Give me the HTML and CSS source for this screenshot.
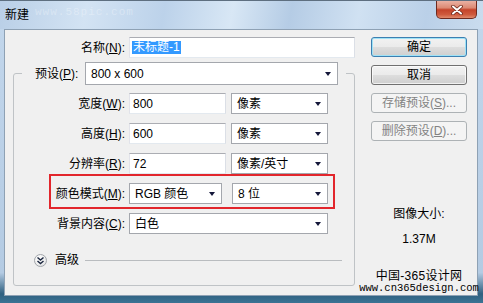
FILE: index.html
```html
<!DOCTYPE html>
<html>
    <head>
        <meta charset="UTF-8">
        <title>新建</title>
        <link rel="stylesheet" href="styles.css">
    </head>
    <body>
        <div class="window">
            <div class="titlebar">
                <span class="title">新建</span>
                <span class="stamp">www.58pic.com</span>
                <div class="close">
                    <svg width="14" height="10" viewBox="0 0 14 10">
                        <path d="M3 1.5 L11 8.5 M11 1.5 L3 8.5" stroke="#6b2618" stroke-width="3.6" stroke-linecap="round"/>
                        <path d="M3 1.5 L11 8.5 M11 1.5 L3 8.5" stroke="#fff" stroke-width="2" stroke-linecap="round"/>
                    </svg>
                </div>
            </div>
            <div class="client">
                <div class="main">
                    <div class="row">
                        <span class="lbl">名称(<u>N</u>):</span>
                        <div class="field name"><span class="picked">未标题-1</span></div>
                    </div>

                    <fieldset class="group">
                        <legend>
                            <div class="preset-row">
                                <span class="preset-lbl">预设(<u>P</u>):</span>
                                <div class="combo preset">800 x 600<i class="arrow"></i></div>
                            </div>
                        </legend>

                        <div class="row">
                            <span class="lbl">宽度(<u>W</u>):</span>
                            <div class="field short">800</div>
                            <div class="combo unit">像素<i class="arrow"></i></div>
                        </div>
                        <div class="row">
                            <span class="lbl">高度(<u>H</u>):</span>
                            <div class="field short">600</div>
                            <div class="combo unit">像素<i class="arrow"></i></div>
                        </div>
                        <div class="row">
                            <span class="lbl">分辨率(<u>R</u>):</span>
                            <div class="field short">72</div>
                            <div class="combo unit">像素/英寸<i class="arrow"></i></div>
                        </div>
                        <!-- this row is circled in red -->
                        <div class="row marked">
                            <span class="lbl">颜色模式(<u>M</u>):</span>
                            <div class="combo mode">RGB 颜色<i class="arrow"></i></div>
                            <div class="combo depth">8 位<i class="arrow"></i></div>
                        </div>
                        <div class="row">
                            <span class="lbl">背景内容(<u>C</u>):</span>
                            <div class="combo bg">白色<i class="arrow"></i></div>
                        </div>

                        <div class="advanced">
                            <span class="expand">
                                <svg width="9" height="9" viewBox="0 0 9 9">
                                    <path d="M1.5 1.5 L4.5 4 L7.5 1.5 M1.5 5 L4.5 7.5 L7.5 5" fill="none" stroke="#1d2840" stroke-width="1.5"/>
                                </svg>
                            </span>
                            <span>高级</span>
                            <span class="rule"></span>
                        </div>
                    </fieldset>
                </div>

                <div class="side">
                    <div class="btn default">确定</div>
                    <div class="btn">取消</div>
                    <div class="btn off">存储预设(<u>S</u>)...</div>
                    <div class="btn off">删除预设(<u>D</u>)...</div>

                    <div class="size-title">图像大小:</div>
                    <div class="size-value">1.37M</div>

                    <div class="site">中国-365设计网</div>
                    <div class="url">www.cn365design.com</div>
                </div>
            </div>
        </div>
    </body>
</html>
```

FILE: styles.css
```css
*{
    box-sizing: border-box;
}

body{
    margin: 0;
    font: 12px/14px "Liberation Sans", "Noto Sans CJK SC", sans-serif;
    color: #000;
    background: #fff;
}

u{
    text-decoration: underline;
    text-underline-offset: 1px;
}

.window{
    width: 483px;
    height: 303px;
    display: flex;
    flex-direction: column;
    background: linear-gradient(180deg, #c3d7ec 0%, #b4cbe3 90%, #2f6080 97%, #3b7394 100%);
}

.titlebar{
    height: 29px;
    display: flex;
    align-items: flex-start;
    padding-left: 5px;
    border-top: 1px solid #5e6f80;
    background: linear-gradient(100deg, #b9cfe7 0%, #d3e3f3 18%, #bcd2ea 34%, #d8e7f5 48%, #b5cce5 60%, #d0e1f2 74%, #bad0e8 88%, #cadcee 100%);
}

.title{
    margin-top: 7px;
    font-size: 12px;
}

.stamp{
    margin: 5px 0 0 6px;
    font: 11px "Liberation Mono", monospace;
    color: rgba(255, 255, 255, 0.3);
    letter-spacing: 1px;
}

.close{
    margin-left: auto;
    margin-right: 6px;
    width: 41px;
    height: 18px;
    display: flex;
    align-items: center;
    justify-content: center;
    border: 1px solid #6e2a1f;
    border-top: none;
    border-radius: 0 0 5px 5px;
    background: linear-gradient(180deg, #eab1a3 0%, #dc8a74 40%, #c4432a 52%, #cf5a3d 80%, #e08a6c 100%);
}

.client{
    flex: 1;
    margin: 0 5px 7px 4px;
    border: 1px solid #8ea1b4;
    background: #f0f0f0;
    display: flex;
    gap: 16px;
    padding: 7px 0 0 8px;
}

.main{
    width: 342px;
}

.row{
    display: flex;
    align-items: center;
    height: 21px;
}

.lbl{
    width: 103px;
    margin-right: 4px;
    text-align: right;
    white-space: nowrap;
}

.main > .row .lbl{
    width: 112px;
}

.field, .combo{
    height: 21px;
    display: flex;
    align-items: center;
    padding-left: 3px;
    background: #fff;
    white-space: nowrap;
}

.field{
    border: 1px solid #abadb3;
    border-color: #abadb3 #dbdfe6 #e3e9ef #e2e3ea;
}

.combo{
    border: 1px solid #a4a7ad;
    padding-left: 5px;
}

.arrow{
    margin-left: auto;
    margin-right: 6px;
    width: 0;
    height: 0;
    border-left: 3.5px solid transparent;
    border-right: 3.5px solid transparent;
    border-top: 4px solid #14173a;
}

.name{
    width: 226px;
    padding-left: 2px;
}

.picked{
    background: #3399ff;
    color: #fff;
    padding: 0 1px;
    line-height: 13px;
}

.group{
    width: 338px;
    margin: 4px 0 0;
    padding: 0 8px 18px 8px;
    border: 1px solid #bfc3c6;
    border-radius: 3px;
}

.group legend{
    padding: 0 8px 0 13px;
}

.preset-row{
    display: flex;
    align-items: center;
}

.preset-lbl{
    width: 50px;
}

.preset{
    width: 253px;
    height: 23px;
}

.group legend + .row{
    margin-top: 8px;
}

.group .row + .row{
    margin-top: 9px;
}

.short{
    width: 97px;
}

.unit{
    width: 97px;
    margin-left: 5px;
}

.marked{
    position: relative;
    margin-left: 31px;
}

.marked .lbl{
    width: 72px;
}

/* red annotation frame */
.marked::after{
    content: "";
    position: absolute;
    top: -9px;
    bottom: -5px;
    left: -4px;
    right: 11px;
    border: 2px solid #e2262c;
}

.mode{
    width: 93px;
}

.depth{
    width: 96px;
    margin-left: 10px;
}

.bg{
    width: 199px;
}

.advanced{
    display: flex;
    align-items: center;
    height: 14px;
    margin-top: 19px;
    padding-left: 12px;
}

.expand{
    width: 13px;
    height: 13px;
    margin-right: 8px;
    display: flex;
    align-items: center;
    justify-content: center;
    border: 1px solid #a2a6ab;
    border-radius: 50%;
    background: radial-gradient(circle at 40% 35%, #ffffff 0%, #f2f2f2 50%, #d4d6d9 100%);
}

.rule{
    flex: 1;
    height: 1px;
    margin: 0 4px 0 6px;
    background: #b9bcbf;
}

.side{
    width: 96px;
    display: flex;
    flex-direction: column;
    align-items: center;
}

.btn{
    width: 96px;
    height: 20px;
    margin-bottom: 8px;
    display: flex;
    align-items: center;
    justify-content: center;
    border: 1px solid #707070;
    border-radius: 3px;
    background: linear-gradient(180deg, #f2f2f2 0%, #ebebeb 48%, #dddddd 52%, #cfcfcf 100%);
    box-shadow: inset 0 0 0 1px rgba(255, 255, 255, 0.7);
    white-space: nowrap;
}

.default{
    border-color: #3c7fb1;
    box-shadow: inset 0 0 0 1px #9fe2f6;
}

.off{
    border-color: #adb2b5;
    background: #f4f4f4;
    color: #838383;
    box-shadow: none;
}

.size-title{
    margin-top: 58px;
}

.size-value{
    margin-top: 11px;
}

.site{
    margin-top: 23px;
    letter-spacing: 0.3px;
    white-space: nowrap;
}

.url{
    margin-top: -1px;
    font: 10.5px/13px "Liberation Mono", monospace;
    white-space: nowrap;
}
```
